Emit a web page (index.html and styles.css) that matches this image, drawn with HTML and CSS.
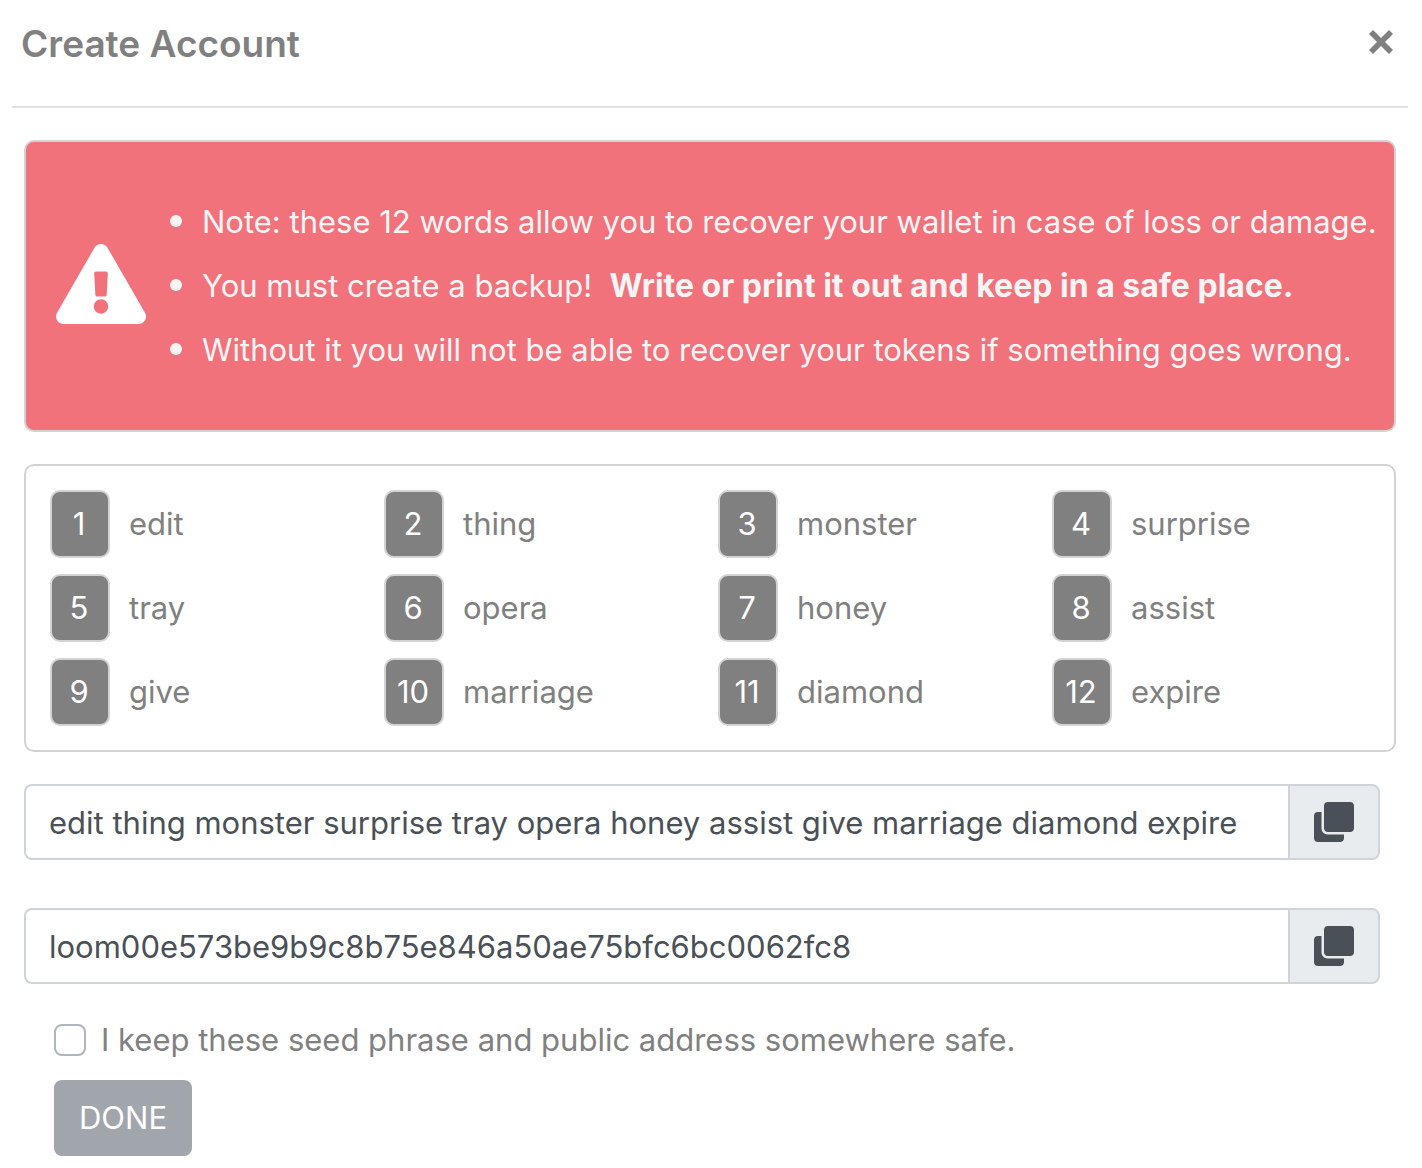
FILE: index.html
```html
<!DOCTYPE html>
<html lang="en">
<head>
<meta charset="utf-8">
<meta name="viewport" content="width=device-width, initial-scale=1">
<title>Create Account</title>
<link rel="stylesheet" href="styles.css">
</head>
<body>
<main class="modal">
  <header class="modal-header">
    <h1 class="modal-title">Create Account</h1>
    <button class="close" type="button" aria-label="Close">
      <svg class="close-icon" viewBox="0 0 24 24" aria-hidden="true"><path d="M4 0 12 8 20 0 24 4 16 12 24 20 20 24 12 16 4 24 0 20 8 12 0 4Z"/></svg>
    </button>
  </header>

  <div class="modal-body">
    <section class="card warning">
      <svg class="warning-icon" viewBox="0 0 576 512" aria-hidden="true"><path d="M569.517 440.013C587.975 472.007 564.806 512 527.94 512H48.054c-36.937 0-59.999-40.055-41.577-71.987L246.423 23.985c18.467-32.009 64.72-31.951 83.154 0l239.94 416.028zM288 354c-25.405 0-46 20.595-46 46s20.595 46 46 46 46-20.595 46-46-20.595-46-46-46zm-43.673-165.346l7.418 136c.347 6.364 5.609 11.346 11.982 11.346h48.546c6.373 0 11.635-4.982 11.982-11.346l7.418-136c.375-6.874-5.098-12.654-11.982-12.654h-63.383c-6.884 0-12.356 5.78-11.981 12.654z"/></svg>
      <ul class="warning-list">
        <li>Note: these 12 words allow you to recover your wallet in case of loss or damage.</li>
        <li>You must create a backup!&nbsp; <strong>Write or print it out and keep in a safe place.</strong></li>
        <li>Without it you will not be able to recover your tokens if something goes wrong.</li>
      </ul>
    </section>

    <section class="card words">
      <div class="word"><span class="badge">1</span><span>edit</span></div>
      <div class="word"><span class="badge">2</span><span>thing</span></div>
      <div class="word"><span class="badge">3</span><span>monster</span></div>
      <div class="word"><span class="badge">4</span><span>surprise</span></div>
      <div class="word"><span class="badge">5</span><span>tray</span></div>
      <div class="word"><span class="badge">6</span><span>opera</span></div>
      <div class="word"><span class="badge">7</span><span>honey</span></div>
      <div class="word"><span class="badge">8</span><span>assist</span></div>
      <div class="word"><span class="badge">9</span><span>give</span></div>
      <div class="word"><span class="badge">10</span><span>marriage</span></div>
      <div class="word"><span class="badge">11</span><span>diamond</span></div>
      <div class="word"><span class="badge">12</span><span>expire</span></div>
    </section>

    <div class="input-group">
      <input class="field" type="text" aria-label="Seed phrase" readonly value="edit thing monster surprise tray opera honey assist give marriage diamond expire">
      <button class="copy" type="button" aria-label="Copy seed phrase">
        <svg class="copy-icon" viewBox="0 0 512 512" aria-hidden="true"><path d="M464 0c26.51 0 48 21.49 48 48v288c0 26.51-21.49 48-48 48H176c-26.51 0-48-21.49-48-48V48c0-26.51 21.49-48 48-48h288M176 416c-44.112 0-80-35.888-80-80V128H48c-26.51 0-48 21.49-48 48v288c0 26.51 21.49 48 48 48h288c26.51 0 48-21.49 48-48v-48H176z"/></svg>
      </button>
    </div>

    <div class="input-group">
      <input class="field" type="text" aria-label="Public address" readonly value="loom00e573be9b9c8b75e846a50ae75bfc6bc0062fc8">
      <button class="copy" type="button" aria-label="Copy public address">
        <svg class="copy-icon" viewBox="0 0 512 512" aria-hidden="true"><path d="M464 0c26.51 0 48 21.49 48 48v288c0 26.51-21.49 48-48 48H176c-26.51 0-48-21.49-48-48V48c0-26.51 21.49-48 48-48h288M176 416c-44.112 0-80-35.888-80-80V128H48c-26.51 0-48 21.49-48 48v288c0 26.51 21.49 48 48 48h288c26.51 0 48-21.49 48-48v-48H176z"/></svg>
      </button>
    </div>

    <div class="confirm">
      <label class="check"><input class="checkbox" type="checkbox"><span>I keep these seed phrase and public address somewhere safe.</span></label>
      <button class="done" type="button">DONE</button>
    </div>
  </div>
</main>
</body>
</html>
```
FILE: styles.css
```css
* {
  box-sizing: border-box;
}

body {
  margin: 0;
  background: #fff;
  color: gray;
  font-family: Inter, "Liberation Sans", sans-serif;
  font-size: 31px;
  line-height: 48px;
}

button,
input {
  margin: 0;
  font: inherit;
}

.modal {
  padding: 0 14px 12px 12px;
}

.modal-header {
  display: flex;
  align-items: flex-start;
  justify-content: space-between;
  padding: 20px 15px 38px 9px;
  border-bottom: 2px solid #dee2e6;
}

.modal-title {
  margin: 0;
  font-size: 37px;
  font-weight: 600;
  line-height: 48px;
}

.close {
  display: flex;
  padding: 10px 0;
  border: 0;
  background: none;
  color: inherit;
}

.close-icon {
  width: 24px;
  height: 24px;
  fill: currentColor;
}

.modal-body {
  padding: 32px 12px 0;
}

.card {
  margin-bottom: 32px;
  border: 2px solid lightgray;
  border-radius: 10px;
}

.warning {
  display: flex;
  align-items: center;
  padding: 48px 0 48px 30px;
  background: #f2727c;
  color: #f5f5f5;
}

.warning-icon {
  flex: none;
  width: 90px;
  height: 80px;
  margin-bottom: 4px;
  fill: #fff;
}

.warning-list {
  margin: 0;
  padding: 0 0 0 56px;
  line-height: 64px;
  list-style: none;
}

.warning-list li::before {
  content: "";
  display: inline-block;
  width: 12px;
  height: 12px;
  margin: 0 20px 0 -32px;
  border-radius: 50%;
  background: currentColor;
  vertical-align: 6px;
}

.warning-list strong {
  font-size: 32px;
  line-height: 48px;
}

.words {
  display: grid;
  grid-template-columns: repeat(4, 1fr);
  row-gap: 16px;
  padding: 24px 8px 24px 24px;
}

.word {
  display: flex;
  align-items: center;
  gap: 19px;
}

.badge {
  flex: none;
  width: 60px;
  padding: 8px 2px 8px 0;
  border: 2px solid lightgray;
  border-radius: 10px;
  background: gray;
  color: #fff;
  text-align: center;
}

.input-group {
  display: flex;
  margin: 0 16px 48px 0;
}

.field {
  flex: 1;
  min-width: 0;
  height: 76px;
  padding: 12px 23px;
  border: 2px solid #ced4da;
  border-right: 0;
  border-radius: 8px 0 0 8px;
  background: #fff;
  color: #495057;
}

.copy {
  display: flex;
  align-items: center;
  padding: 0 24px;
  border: 2px solid #ced4da;
  border-radius: 0 8px 8px 0;
  background: #e9ecef;
  color: #495057;
}

.copy-icon {
  width: 40px;
  height: 40px;
  fill: currentColor;
}

.confirm {
  display: flex;
  flex-direction: column;
  align-items: flex-start;
  gap: 16px;
  margin-top: -16px;
  padding: 0 30px;
}

.check {
  display: flex;
  align-items: center;
  gap: 15px;
}

.checkbox {
  flex: none;
  width: 32px;
  height: 32px;
  border: 2px solid #adb5bd;
  border-radius: 8px;
  background: #fff;
  appearance: none;
}

.checkbox:checked {
  background: #495057;
}

.done {
  padding: 14px 25px;
  border: 0;
  border-radius: 8px;
  background: #a1a6ad;
  color: #fff;
}
```
